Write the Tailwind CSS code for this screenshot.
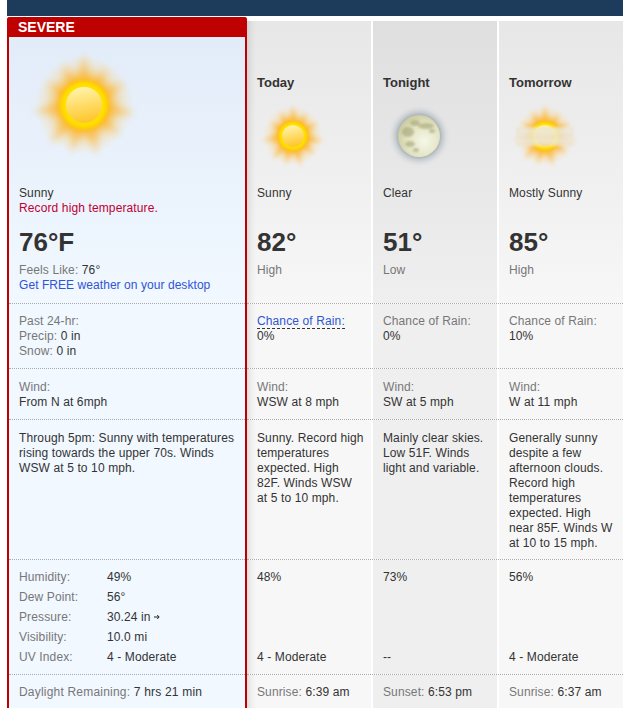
<!DOCTYPE html>
<html lang="en">
<head>
    <meta charset="UTF-8">
    <meta name="viewport" content="width=device-width, initial-scale=1.0">
    <title>Weather Forecast</title>
    <script src="https://cdn.jsdelivr.net/npm/@tailwindcss/browser@4"></script>
</head>
<body class="bg-white h-[708px] overflow-hidden font-['Liberation_Sans',Arial,sans-serif] text-[12px] leading-[15px] tracking-[0.12px] text-[#333]">
    <!-- Shared icon artwork -->
    <svg width="0" height="0" class="absolute">
        <defs>
            <radialGradient id="halo">
                <stop offset="0.35" stop-color="#ffbe1a"/>
                <stop offset="0.55" stop-color="#fdb92e" stop-opacity="0.68"/>
                <stop offset="0.75" stop-color="#fdc660" stop-opacity="0.3"/>
                <stop offset="1" stop-color="#ffd88a" stop-opacity="0"/>
            </radialGradient>
            <radialGradient id="ring">
                <stop offset="0.62" stop-color="#ffe600"/>
                <stop offset="0.78" stop-color="#ffd800"/>
                <stop offset="1" stop-color="#ffb800" stop-opacity="0"/>
            </radialGradient>
            <linearGradient id="disk" x1="0.3" y1="0" x2="0.5" y2="1">
                <stop offset="0" stop-color="#fff4b0"/>
                <stop offset="0.45" stop-color="#ffdf70"/>
                <stop offset="1" stop-color="#ffc52a"/>
            </linearGradient>
            <radialGradient id="moonglow">
                <stop offset="0.6" stop-color="#7b8c98" stop-opacity="0.85"/>
                <stop offset="0.78" stop-color="#a9b3ba" stop-opacity="0.45"/>
                <stop offset="1" stop-color="#d5d9dc" stop-opacity="0"/>
            </radialGradient>
            <radialGradient id="moonface" cx="0.62" cy="0.62" r="0.7">
                <stop offset="0" stop-color="#f6f7e8"/>
                <stop offset="0.6" stop-color="#e2e3c2"/>
                <stop offset="1" stop-color="#c6c69c"/>
            </radialGradient>
            <filter id="blur3" x="-30%" y="-30%" width="160%" height="160%"><feGaussianBlur stdDeviation="3.5"/></filter>
            <filter id="blur1" x="-30%" y="-30%" width="160%" height="160%"><feGaussianBlur stdDeviation="1"/></filter>
            <filter id="blurhaze" x="-30%" y="-60%" width="160%" height="220%"><feGaussianBlur stdDeviation="1.4"/></filter>
            <polygon id="ray" points="-7,-22 0,-52 7,-22"/>
            <symbol id="sun" viewBox="-60 -60 120 120">
                <circle r="50" fill="url(#halo)"/>
                <g fill="#ffab14" opacity="0.45" filter="url(#blur3)">
                    <use href="#ray"/>
                    <use href="#ray" transform="rotate(32) scale(.85)"/>
                    <use href="#ray" transform="rotate(62) scale(.9)"/>
                    <use href="#ray" transform="rotate(100)"/>
                    <use href="#ray" transform="rotate(130) scale(.9)"/>
                    <use href="#ray" transform="rotate(165)"/>
                    <use href="#ray" transform="rotate(195) scale(.95)"/>
                    <use href="#ray" transform="rotate(222)"/>
                    <use href="#ray" transform="rotate(262)"/>
                    <use href="#ray" transform="rotate(300) scale(.85)"/>
                    <use href="#ray" transform="rotate(332) scale(.9)"/>
                </g>
                <circle r="28" fill="url(#ring)"/>
                <circle r="18" fill="url(#disk)"/>
            </symbol>
        </defs>
    </svg>

    <!-- Top bar -->
    <div class="ml-[7px] w-[616px] h-4 bg-[#1d3b5a]"></div>

    <div class="ml-[7px] w-[616px] mt-px">
        <!-- Summary row -->
        <div class="flex">
            <div class="w-[240px] h-[286px] border-x-2 border-[#bf0000] rounded-t-[3px] bg-linear-to-b from-[#e1ebf8] to-[#f1f8ff]">
                <div class="-mx-0.5 h-5 bg-[#bf0000] rounded-t-[3px] pl-[11px] text-white font-bold text-[14px] leading-5 tracking-normal">SEVERE</div>
                <svg class="ml-[15px] mt-[8px] mb-[21px] block w-[120px] h-[120px]"><use href="#sun"/></svg>
                <div class="px-2.5">
                    <p>Sunny</p>
                    <p class="text-[#c00033]">Record high temperature.</p>
                    <p class="mt-[11px] font-bold text-[26px] leading-[30px] tracking-normal">76°F</p>
                    <p class="mt-[6px] text-[#777]">Feels Like: <span class="text-[#333]">76°</span></p>
                    <a href="#" class="text-[#2f55d4] tracking-[0.06px]">Get FREE weather on your desktop</a>
                </div>
            </div>
            <div class="flex-1 mt-1 grid grid-cols-3 gap-x-0.5">
                <div class="px-2.5 pt-[54px] bg-linear-to-b from-[#e7e7e7] to-[#f7f7f7] shadow-[inset_9px_0_8px_-8px_rgba(0,0,0,0.16)]">
                    <h3 class="font-bold text-[13px] leading-4 tracking-normal">Today</h3>
                    <svg class="mt-[9px] mb-[14px] block w-[72px] h-[72px]"><use href="#sun"/></svg>
                    <p>Sunny</p>
                    <p class="mt-[26px] font-bold text-[26px] leading-[30px] tracking-normal">82°</p>
                    <p class="mt-[6px] text-[#777]">High</p>
                </div>
                <div class="px-2.5 pt-[54px] bg-linear-to-b from-[#dfdfdf] to-[#efefef]">
                    <h3 class="font-bold text-[13px] leading-4 tracking-normal">Tonight</h3>
                    <svg class="mt-[9px] mb-[14px] block w-[72px] h-[72px]" viewBox="-36 -36 72 72">
                        <circle r="31" fill="url(#moonglow)"/>
                        <circle r="21" fill="url(#moonface)"/>
                        <g fill="#a3a374" opacity="0.6" filter="url(#blur1)">
                            <ellipse cx="-11" cy="-4" rx="6" ry="5"/>
                            <ellipse cx="-4" cy="-13" rx="5" ry="3"/>
                            <ellipse cx="7" cy="-10" rx="8" ry="3"/>
                            <ellipse cx="-9" cy="8" rx="5" ry="3"/>
                            <ellipse cx="-3" cy="14" rx="3" ry="2"/>
                            <ellipse cx="13" cy="-5" rx="3" ry="2"/>
                        </g>
                    </svg>
                    <p>Clear</p>
                    <p class="mt-[26px] font-bold text-[26px] leading-[30px] tracking-normal">51°</p>
                    <p class="mt-[6px] text-[#777]">Low</p>
                </div>
                <div class="px-2.5 pt-[54px] bg-linear-to-b from-[#e7e7e7] to-[#f7f7f7]">
                    <h3 class="font-bold text-[13px] leading-4 tracking-normal">Tomorrow</h3>
                    <svg class="mt-[9px] mb-[14px] block w-[72px] h-[72px]" viewBox="-36 -36 72 72">
                        <use href="#sun" x="-36" y="-36" width="72" height="72"/>
                        <rect x="-29" y="-9" width="58" height="19" fill="#ebe5d8" opacity="0.82" filter="url(#blurhaze)"/>
                        <circle r="11" fill="none" stroke="#fff08a" stroke-width="1" opacity="0.55"/>
                        <g fill="#f6f2e8" opacity="0.6" filter="url(#blur1)">
                            <rect x="-26" y="-5" width="52" height="1"/>
                            <rect x="-28" y="4" width="56" height="1"/>
                        </g>
                    </svg>
                    <p>Mostly Sunny</p>
                    <p class="mt-[26px] font-bold text-[26px] leading-[30px] tracking-normal">85°</p>
                    <p class="mt-[6px] text-[#777]">High</p>
                </div>
            </div>
        </div>

        <!-- Precipitation -->
        <div class="flex h-[65px]">
            <div class="w-[240px] border-x-2 border-[#bf0000]"><div class="h-full border-t border-dotted border-[#aaa] bg-[#f1f8ff] px-2.5 pt-2.5 text-[#777]">
                <p>Past 24-hr:</p>
                <p>Precip: <span class="text-[#333]">0 in</span></p>
                <p>Snow: <span class="text-[#333]">0 in</span></p>
            </div></div>
            <div class="flex-1 border-t border-dotted border-[#aaa] grid grid-cols-3 gap-x-0.5">
                <div class="px-2.5 pt-2.5 bg-[#f7f7f7] shadow-[inset_9px_0_8px_-8px_rgba(0,0,0,0.16)]">
                    <a href="#" class="text-[#2f55d4] border-b border-dashed border-[#333]">Chance of Rain:</a>
                    <p>0%</p>
                </div>
                <div class="px-2.5 pt-2.5 bg-[#efefef]"><p class="text-[#777]">Chance of Rain:</p><p>0%</p></div>
                <div class="px-2.5 pt-2.5 bg-[#f7f7f7]"><p class="text-[#777]">Chance of Rain:</p><p>10%</p></div>
            </div>
        </div>

        <!-- Wind -->
        <div class="flex h-[51px]">
            <div class="w-[240px] border-x-2 border-[#bf0000]"><div class="h-full border-t border-dotted border-[#aaa] bg-[#f1f8ff] px-2.5 pt-[11px]">
                <p class="text-[#777]">Wind:</p><p>From N at 6mph</p>
            </div></div>
            <div class="flex-1 border-t border-dotted border-[#aaa] grid grid-cols-3 gap-x-0.5">
                <div class="px-2.5 pt-[11px] bg-[#f7f7f7] shadow-[inset_9px_0_8px_-8px_rgba(0,0,0,0.16)]"><p class="text-[#777]">Wind:</p><p>WSW at 8 mph</p></div>
                <div class="px-2.5 pt-[11px] bg-[#efefef]"><p class="text-[#777]">Wind:</p><p>SW at 5 mph</p></div>
                <div class="px-2.5 pt-[11px] bg-[#f7f7f7]"><p class="text-[#777]">Wind:</p><p>W at 11 mph</p></div>
            </div>
        </div>

        <!-- Forecast text -->
        <div class="flex h-[140px]">
            <div class="w-[240px] border-x-2 border-[#bf0000]"><div class="h-full border-t border-dotted border-[#aaa] bg-[#f1f8ff] px-2.5 pt-[11px]">
                Through 5pm: Sunny with temperatures rising towards the upper 70s. Winds WSW at 5 to 10 mph.
            </div></div>
            <div class="flex-1 border-t border-dotted border-[#aaa] grid grid-cols-3 gap-x-0.5">
                <div class="pl-2.5 pr-[7px] pt-[11px] bg-[#f7f7f7] shadow-[inset_9px_0_8px_-8px_rgba(0,0,0,0.16)]">Sunny. Record high temperatures expected. High 82F. Winds WSW at 5 to 10 mph.</div>
                <div class="pl-2.5 pr-[7px] pt-[11px] bg-[#efefef]">Mainly clear skies. Low 51F. Winds light and variable.</div>
                <div class="pl-2.5 pr-[7px] pt-[11px] bg-[#f7f7f7]">Generally sunny despite a few afternoon clouds. Record high temperatures expected. High near 85F. Winds W at 10 to 15 mph.</div>
            </div>
        </div>

        <!-- Conditions -->
        <div class="flex h-[115px]">
            <div class="w-[240px] border-x-2 border-[#bf0000]"><div class="h-full border-t border-dotted border-[#aaa] bg-[#f1f8ff] px-2.5 pt-[7px]">
                <div class="grid grid-cols-[88px_1fr] auto-rows-[20px] items-center">
                    <span class="text-[#777]">Humidity:</span><span>49%</span>
                    <span class="text-[#777]">Dew Point:</span><span>56°</span>
                    <span class="text-[#777]">Pressure:</span>
                    <span class="flex items-center gap-[3px]">30.24 in
                        <svg class="w-[6px] h-[6px]" viewBox="0 0 6 6" fill="none" stroke="#222" stroke-width="1"><path d="M0 3H5M3.2 1L5.2 3L3.2 5"/></svg>
                    </span>
                    <span class="text-[#777]">Visibility:</span><span>10.0 mi</span>
                    <span class="text-[#777]">UV Index:</span><span>4 - Moderate</span>
                </div>
            </div></div>
            <div class="flex-1 border-t border-dotted border-[#aaa] grid grid-cols-3 gap-x-0.5">
                <div class="px-2.5 pt-[10px] pb-[9px] flex flex-col justify-between bg-[#f7f7f7] shadow-[inset_9px_0_8px_-8px_rgba(0,0,0,0.16)]"><p>48%</p><p>4 - Moderate</p></div>
                <div class="px-2.5 pt-[10px] pb-[9px] flex flex-col justify-between bg-[#efefef]"><p>73%</p><p>--</p></div>
                <div class="px-2.5 pt-[10px] pb-[9px] flex flex-col justify-between bg-[#f7f7f7]"><p>56%</p><p>4 - Moderate</p></div>
            </div>
        </div>

        <!-- Daylight -->
        <div class="flex h-[40px]">
            <div class="w-[240px] border-x-2 border-[#bf0000]"><div class="h-full border-t border-dotted border-[#aaa] bg-[#f1f8ff] px-2.5 pt-2.5 text-[#777] tracking-[0.2px]">
                Daylight Remaining: <span class="text-[#333]">7 hrs 21 min</span>
            </div></div>
            <div class="flex-1 border-t border-dotted border-[#aaa] grid grid-cols-3 gap-x-0.5">
                <div class="px-2.5 pt-2.5 bg-[#f7f7f7] text-[#777] shadow-[inset_9px_0_8px_-8px_rgba(0,0,0,0.16)]">Sunrise: <span class="text-[#333]">6:39 am</span></div>
                <div class="px-2.5 pt-2.5 bg-[#efefef] text-[#777]">Sunset: <span class="text-[#333]">6:53 pm</span></div>
                <div class="px-2.5 pt-2.5 bg-[#f7f7f7] text-[#777]">Sunrise: <span class="text-[#333]">6:37 am</span></div>
            </div>
        </div>
    </div>
</body>
</html>
